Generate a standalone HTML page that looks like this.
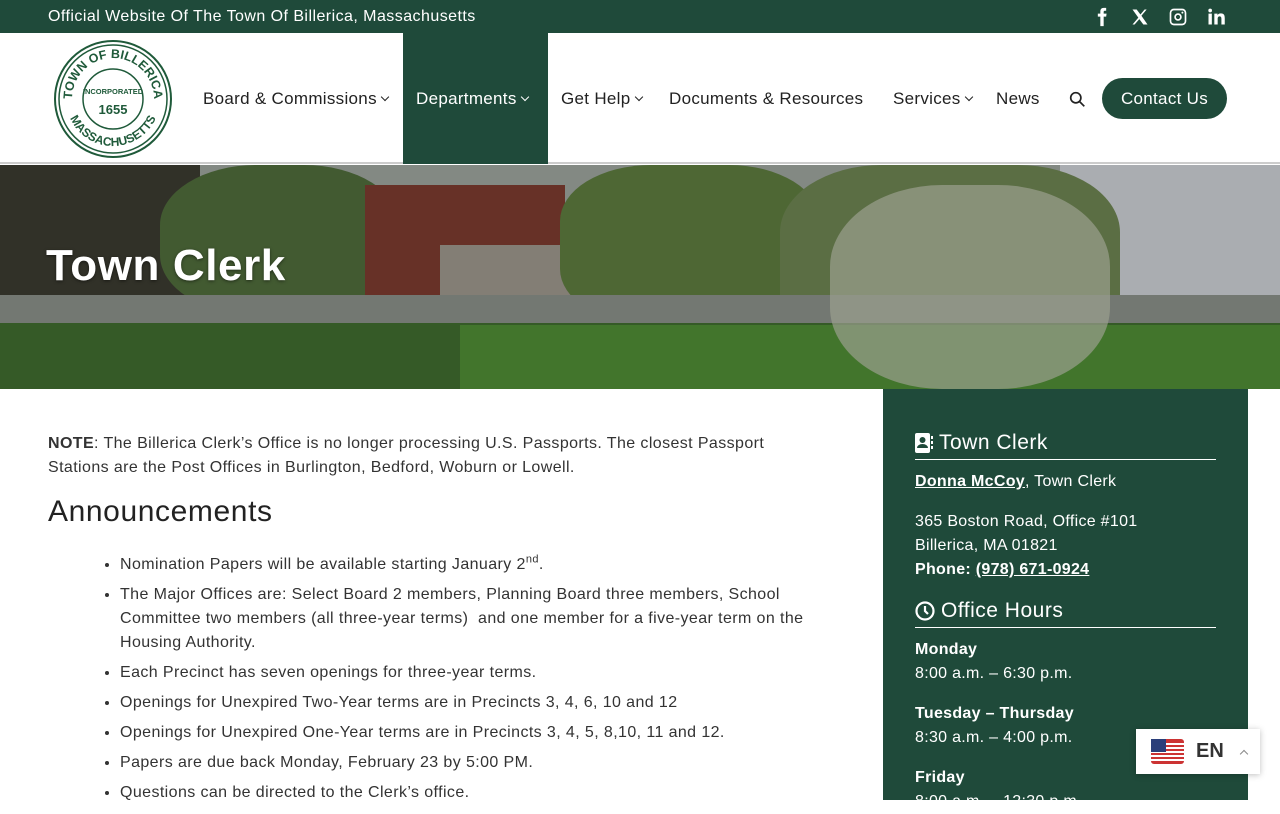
<!DOCTYPE html>
<html><head><meta charset="utf-8"><style>
*{margin:0;padding:0;box-sizing:border-box}
body{width:1280px;height:800px;overflow:hidden;font-family:"Liberation Sans",sans-serif;background:#fff;color:#222}
.top{height:33px;background:#1f4a3a;color:#fff;font-size:16px;letter-spacing:0.45px;display:flex;align-items:center;padding-left:48px;position:relative}
.soc{position:absolute;right:54px;top:7px;display:flex;gap:18px}
.soc svg{width:20px;height:20px;fill:#fff}
.hdr{height:131px;position:relative;border-bottom:2px solid #ccc}
.logo{position:absolute;left:53px;top:6px;width:120px;height:120px}
.nav{position:absolute;top:0;left:0;height:131px;font-size:17px;color:#222;letter-spacing:0.3px}
.nav span{position:absolute;top:56px;white-space:nowrap}
.dep{position:absolute;left:403px;top:0;width:145px;height:131px;background:#1f4a3a}
.cv{display:inline-block;width:6px;height:6px;border-right:1.3px solid currentColor;border-bottom:1.3px solid currentColor;transform:rotate(45deg);margin-left:5px;position:relative;top:-4px}
.btn{position:absolute;left:1102px;top:45px;width:125px;height:41px;border-radius:21px;background:#1f4a3a;color:#fff;font-size:17px;letter-spacing:0.3px;text-align:center;line-height:41px}
.hero{position:absolute;top:165px;left:0;width:1280px;height:224px;overflow:hidden;background:#6d7a6e}
.hero div{position:absolute}
.hero h1{position:absolute;left:46px;top:76px;color:#fff;font-size:44px;font-weight:bold;letter-spacing:0.6px;text-shadow:0 1px 3px rgba(0,0,0,.5)}
.main{position:absolute;left:48px;top:432px;width:750px;font-size:16px;line-height:24px;color:#333;letter-spacing:0.4px}
.main h2{font-weight:normal;font-size:30px;margin:20px 0 29px;color:#222;letter-spacing:0.6px}
.main ul{margin-left:72px;width:710px}
.main li{margin-bottom:6px}
.side{position:absolute;left:883px;top:389px;width:365px;height:411px;background:#1f4a3a;color:#fff;padding:42px 32px 0 32px;font-size:16px;line-height:24px;letter-spacing:0.3px}
.side h3{font-weight:normal;font-size:21px;border-bottom:1px solid #fff;padding-bottom:4px;margin-bottom:10px;display:flex;align-items:center;gap:6px;letter-spacing:0.5px}
.side p{margin-bottom:16px}
.side a{color:#fff;font-weight:bold;text-decoration:underline}
.lang{position:absolute;left:1136px;top:729px;width:124px;height:45px;background:#fff;box-shadow:0 1px 6px rgba(0,0,0,.25);display:flex;align-items:center;padding-left:15px;gap:12px;font-weight:bold;font-size:20px;color:#333}
</style></head><body>
<div class="top">Official Website Of The Town Of Billerica, Massachusetts
<div class="soc">
<svg viewBox="0 0 24 24"><path d="M14 8V6c0-1 .5-1.5 1.5-1.5H17V1h-3c-3 0-4 2-4 4.5V8H7v3.5h3V23h4V11.5h3l.5-3.5z"/></svg>
<svg viewBox="0 0 24 24"><path d="M3 3h5l4.5 6 5-6h2.5l-6.3 7.5L21 21h-5l-4.8-6.5L5.5 21H3l7-8.2z"/></svg>
<svg viewBox="0 0 24 24"><path d="M7 2h10a5 5 0 015 5v10a5 5 0 01-5 5H7a5 5 0 01-5-5V7a5 5 0 015-5zm0 2a3 3 0 00-3 3v10a3 3 0 003 3h10a3 3 0 003-3V7a3 3 0 00-3-3zm5 3.5a4.5 4.5 0 110 9 4.5 4.5 0 010-9zm0 2a2.5 2.5 0 100 5 2.5 2.5 0 000-5zM17.3 5.5a1.2 1.2 0 110 2.4 1.2 1.2 0 010-2.4z"/></svg>
<svg viewBox="0 0 24 24"><path d="M3 8h4v13H3zM5 2a2.2 2.2 0 110 4.4A2.2 2.2 0 015 2zm5 6h3.8v1.8c.6-1 2-2.1 4-2.1 4 0 4.7 2.6 4.7 6V21h-4v-6.4c0-1.5 0-3.4-2.1-3.4s-2.4 1.6-2.4 3.3V21H10z"/></svg>
</div></div>
<div class="hdr">
<svg class="logo" viewBox="0 0 120 120"><circle cx="60" cy="60" r="58" fill="#fff" stroke="#1f5a3a" stroke-width="2"/><circle cx="60" cy="60" r="54" fill="none" stroke="#1f5a3a" stroke-width="1.5"/><circle cx="60" cy="60" r="30" fill="none" stroke="#1f5a3a" stroke-width="1.5"/>
<defs><path id="c" d="M19 60a41 41 0 0182 0"/><path id="d" d="M13 60a47 47 0 0094 0"/></defs>
<text font-size="12.5" font-weight="bold" fill="#1f5a3a" font-family="Liberation Sans"><textPath href="#c" startOffset="50%" text-anchor="middle">TOWN OF BILLERICA</textPath></text>
<text font-size="12" font-weight="bold" fill="#1f5a3a" font-family="Liberation Sans"><textPath href="#d" startOffset="50%" text-anchor="middle">MASSACHUSETTS</textPath></text>
<text x="60" y="55" font-size="7.5" font-weight="bold" fill="#1f5a3a" text-anchor="middle">INCORPORATED</text>
<text x="60" y="75" font-size="13" font-weight="bold" fill="#1f5a3a" text-anchor="middle">1655</text></svg>
<div class="dep"></div>
<div class="nav">
<span style="left:203px">Board &amp; Commissions<i class="cv"></i></span>
<span style="left:416px;color:#fff">Departments<i class="cv"></i></span>
<span style="left:561px">Get Help<i class="cv"></i></span>
<span style="left:669px">Documents &amp; Resources</span>
<span style="left:893px">Services<i class="cv"></i></span>
<span style="left:996px">News</span>
<span style="left:1069px;top:58px"><svg width="17" height="17" viewBox="0 0 20 20"><circle cx="8" cy="8" r="6" fill="none" stroke="#222" stroke-width="2"/><path d="M12.5 12.5L18 18" stroke="#222" stroke-width="2"/></svg></span>
</div>
<div class="btn">Contact Us</div>
</div>
<div class="hero">
<div style="left:0;top:0;width:1280px;height:60px;background:#9aa29b"></div>
<div style="left:0;top:0;width:200px;height:140px;background:#3a3a30"></div>
<div style="left:160px;top:0;width:240px;height:150px;background:#4e6a3a;border-radius:40%"></div>
<div style="left:365px;top:20px;width:200px;height:195px;background:#7a3a2e"></div>
<div style="left:440px;top:80px;width:150px;height:120px;background:#9a948a"></div>
<div style="left:560px;top:0;width:260px;height:160px;background:#5c7a3e;border-radius:35%"></div>
<div style="left:1060px;top:0;width:220px;height:140px;background:#c8ccd0"></div>
<div style="left:780px;top:0;width:340px;height:224px;background:#6b8250;border-radius:30%"></div>
<div style="left:0;top:130px;width:1280px;height:30px;background:#888d86"></div>
<div style="left:0;top:158px;width:1280px;height:66px;background:#3f6a2e"></div>
<div style="left:460px;top:160px;width:820px;height:64px;background:#4e8a34"></div>
<div style="left:830px;top:20px;width:280px;height:204px;background:#b7bca8;opacity:.7;border-radius:40%"></div>
<div style="left:0;top:0;width:1280px;height:224px;background:rgba(0,0,0,.15)"></div>
<h1>Town Clerk</h1>
</div>
<div class="main">
<p><b>NOTE</b>: The Billerica Clerk’s Office is no longer processing U.S. Passports. The closest Passport Stations are the Post Offices in Burlington, Bedford, Woburn or Lowell.</p>
<h2>Announcements</h2>
<ul>
<li>Nomination Papers will be available starting January 2<sup style="font-size:11px;line-height:0">nd</sup>.</li>
<li>The Major Offices are: Select Board 2 members, Planning Board three members, School Committee two members (all three-year terms)&nbsp; and one member for a five-year term on the Housing Authority.</li>
<li>Each Precinct has seven openings for three-year terms.</li>
<li>Openings for Unexpired Two-Year terms are in Precincts 3, 4, 6, 10 and 12</li>
<li>Openings for Unexpired One-Year terms are in Precincts 3, 4, 5, 8,10, 11 and 12.</li>
<li>Papers are due back Monday, February 23 by 5:00 PM.</li>
<li>Questions can be directed to the Clerk’s office.</li>
</ul></div>
<div class="side">
<h3><svg width="18" height="20" viewBox="0 0 18 20"><rect x="0" y="0" width="15" height="20" rx="2" fill="#fff"/><rect x="16" y="3" width="2" height="3" fill="#fff"/><rect x="16" y="8" width="2" height="3" fill="#fff"/><rect x="16" y="13" width="2" height="3" fill="#fff"/><circle cx="7.5" cy="7" r="3" fill="#1f4a3a"/><path d="M2 15a5.5 4 0 0111 0z" fill="#1f4a3a"/></svg>Town Clerk</h3>
<p><a>Donna McCoy</a>, Town Clerk</p>
<p style="margin-bottom:17px">365 Boston Road, Office #101<br>Billerica, MA 01821<br><b>Phone: </b><a>(978) 671-0924</a></p>
<h3><svg width="20" height="20" viewBox="0 0 20 20"><circle cx="10" cy="10" r="8.5" fill="none" stroke="#fff" stroke-width="2.2"/><path d="M10 5v5l3 3" fill="none" stroke="#fff" stroke-width="2.2"/></svg>Office Hours</h3>
<p><b>Monday</b><br>8:00 a.m. – 6:30 p.m.</p>
<p><b>Tuesday – Thursday</b><br>8:30 a.m. – 4:00 p.m.</p>
<p><b>Friday</b><br>8:00 a.m. – 12:30 p.m.</p>
</div>
<div class="lang"><svg width="33" height="25" viewBox="0 0 33 25"><rect width="33" height="25" rx="3" fill="#c33"/><g fill="#fff"><rect y="4" width="33" height="2"/><rect y="8" width="33" height="2"/><rect y="12" width="33" height="2"/><rect y="16" width="33" height="2"/><rect y="20" width="33" height="2"/></g><rect width="15" height="13" fill="#2b3f7a"/></svg>EN<i class="cv" style="transform:rotate(-135deg);top:2px;color:#888"></i></div>
</body></html>
